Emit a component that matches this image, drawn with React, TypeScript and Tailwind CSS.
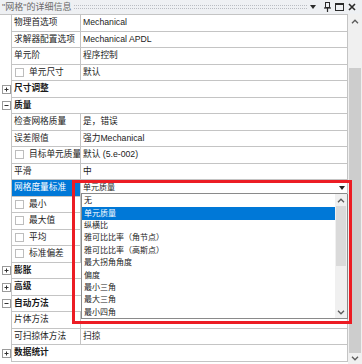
import React from 'react';

type Row = {
  name?: string;
  value?: string;
  check?: boolean;
  selected?: boolean;
  group?: string;
  open?: boolean;
};

const rows: Row[] = [
  { name: '物理首选项', value: 'Mechanical' },
  { name: '求解器配置选项', value: 'Mechanical APDL' },
  { name: '单元阶', value: '程序控制' },
  { name: '单元尺寸', value: '默认', check: true },
  { group: '尺寸调整' },
  { group: '质量', open: true },
  { name: '检查网格质量', value: '是，错误' },
  { name: '误差限值', value: '强力Mechanical' },
  { name: '目标单元质量', value: '默认 (5.e-002)', check: true },
  { name: '平滑', value: '中' },
  { name: '网格度量标准', selected: true },
  { name: '最小', check: true },
  { name: '最大值', check: true },
  { name: '平均', check: true },
  { name: '标准偏差', check: true },
  { group: '膨胀' },
  { group: '高级' },
  { group: '自动方法', open: true },
  { name: '片体方法' },
  { name: '可扫掠体方法', value: '扫掠' },
  { group: '数据统计' },
];

const options = [
  '无',
  '单元质量',
  '纵横比',
  '雅可比比率（角节点）',
  '雅可比比率（高斯点）',
  '最大拐角角度',
  '偏度',
  '最小三角',
  '最大三角',
  '最小四角',
];

function Chevron({ up }: { up?: boolean }) {
  return (
    <svg width="8" height="5" viewBox="0 0 8 5">
      <path
        d={up ? 'M1 4.2 L4 1.2 L7 4.2' : 'M1 0.8 L4 3.8 L7 0.8'}
        fill="none"
        stroke="#5a5a5a"
        strokeWidth="1.3"
      />
    </svg>
  );
}

function Expander({ open }: { open?: boolean }) {
  return (
    <div className="w-[9px] h-[9px] border border-[#9a9a9a] bg-white flex items-center justify-center">
      <svg width="7" height="7" viewBox="0 0 7 7">
        <path d="M1.5 3.5 H5.5" stroke="#333" strokeWidth="1" />
        {!open && <path d="M3.5 1.5 V5.5" stroke="#333" strokeWidth="1" />}
      </svg>
    </div>
  );
}

function Checkbox() {
  return <div className="w-[9px] h-[9px] border border-[#bdbdbd] bg-white shrink-0" />;
}

export default function App() {
  return (
    <div
      className="relative w-[362px] h-[364px] overflow-hidden bg-white text-[#1b1b1b] text-[8.7px] leading-none"
      style={{ fontFamily: "'Liberation Sans', 'Noto Sans CJK SC', sans-serif" }}
    >
      {/* title bar */}
      <div className="h-[14px] flex items-center bg-[#eef0f3] pl-[2px] pr-[6px]">
        <span className="text-[#6a6a6a] text-[9px] whitespace-nowrap">"网格"的详细信息</span>
        <div className="flex-1 mx-[3px] h-[4px] border-y border-dotted border-[#b9bcc2]" />
        <div className="flex items-center gap-[4px]">
          <svg width="6" height="4" viewBox="0 0 6 4" className="mr-[4px]">
            <path d="M0 0 H6 L3 4 Z" fill="#2a2a2a" />
          </svg>
          <svg width="7" height="10" viewBox="0 0 7 10">
            <rect x="1.5" y="0.5" width="4" height="5" fill="none" stroke="#2a2a2a" />
            <path d="M0 6 H7" stroke="#2a2a2a" strokeWidth="1.2" />
            <path d="M3.5 6 V10" stroke="#2a2a2a" strokeWidth="1.2" />
          </svg>
          <svg width="9" height="8" viewBox="0 0 9 8">
            <rect x="0.5" y="0.5" width="8" height="7" fill="none" stroke="#2a2a2a" />
            <path d="M0.5 1.5 H8.5" stroke="#2a2a2a" />
          </svg>
          <svg width="8" height="8" viewBox="0 0 8 8">
            <path d="M1 1 L7 7 M7 1 L1 7" stroke="#2a2a2a" strokeWidth="1.6" />
          </svg>
        </div>
      </div>

      <div className="flex">
        {/* property grid */}
        <div className="w-[348px] border-t border-[#c4c4c4]">
          {rows.map((r, i) => (
            <div key={i} className="flex h-[16.5px]">
              <div className="w-[12px] border-r border-[#c4c4c4] flex items-center pl-[2px]">
                {r.group && <Expander open={r.open} />}
              </div>
              {r.group ? (
                <div className="flex-1 border-b border-r border-[#c4c4c4] flex items-center pl-[2px] font-bold">
                  {r.group}
                </div>
              ) : (
                <>
                  <div
                    className={`w-[69px] border-b border-r border-[#c4c4c4] flex items-center overflow-hidden whitespace-nowrap ${
                      r.selected ? 'bg-[#0078d7] text-white pl-[2px]' : r.check ? 'pl-[3px]' : 'pl-[2px]'
                    }`}
                  >
                    {r.check && <Checkbox />}
                    <span className={r.check ? 'ml-[5px]' : ''}>{r.name}</span>
                  </div>
                  <div className="flex-1 border-b border-r border-[#c4c4c4] flex items-center pl-[2px] whitespace-nowrap">
                    {r.value}
                  </div>
                </>
              )}
            </div>
          ))}
        </div>

        {/* main scrollbar */}
        <div className="w-[14px] h-[350px] bg-[#f0f0f0] flex flex-col items-center">
          <div className="h-[14px] flex items-center">
            <Chevron up />
          </div>
          <div className="w-[12px] h-[40px]" />
          <div className="w-[12px] h-[285px] bg-[#cdcdcd]" />
          <div className="flex-1 flex items-center">
            <Chevron />
          </div>
        </div>
      </div>

      {/* open dropdown with highlight frame */}
      <div className="absolute left-[81px] top-[183px] w-[266px] h-[11px] bg-white border-b border-[#8a8a8a] flex items-center pl-[2px] pr-[2px] text-[8px]">
        <span className="flex-1">单元质量</span>
        <svg width="6" height="4" viewBox="0 0 6 4">
          <path d="M0 0 H6 L3 4 Z" fill="#222" />
        </svg>
      </div>
      <div className="absolute left-[81px] top-[194px] w-[267px] h-[125px] bg-white border border-t-0 border-[#8a8a8a] flex">
        <div className="flex-1 pt-[1px] text-[8px]">
          {options.map((o, i) => (
            <div
              key={o}
              className={`h-[12.4px] flex items-center pl-[2px] whitespace-nowrap ${
                i === 1 ? 'bg-[#0078d7] text-white' : ''
              }`}
            >
              {o}
            </div>
          ))}
        </div>
        <div className="w-[12px] bg-[#f0f0f0] flex flex-col items-center">
          <div className="h-[12px] flex items-center">
            <Chevron up />
          </div>
          <div className="w-[10px] h-[60px] bg-[#dadada]" />
          <div className="flex-1" />
          <div className="h-[12px] flex items-center">
            <Chevron />
          </div>
        </div>
      </div>
      <div className="absolute left-[72px] top-[180px] w-[280px] h-[144px] border-[3px] border-[#ec1c24]" />
    </div>
  );
}
